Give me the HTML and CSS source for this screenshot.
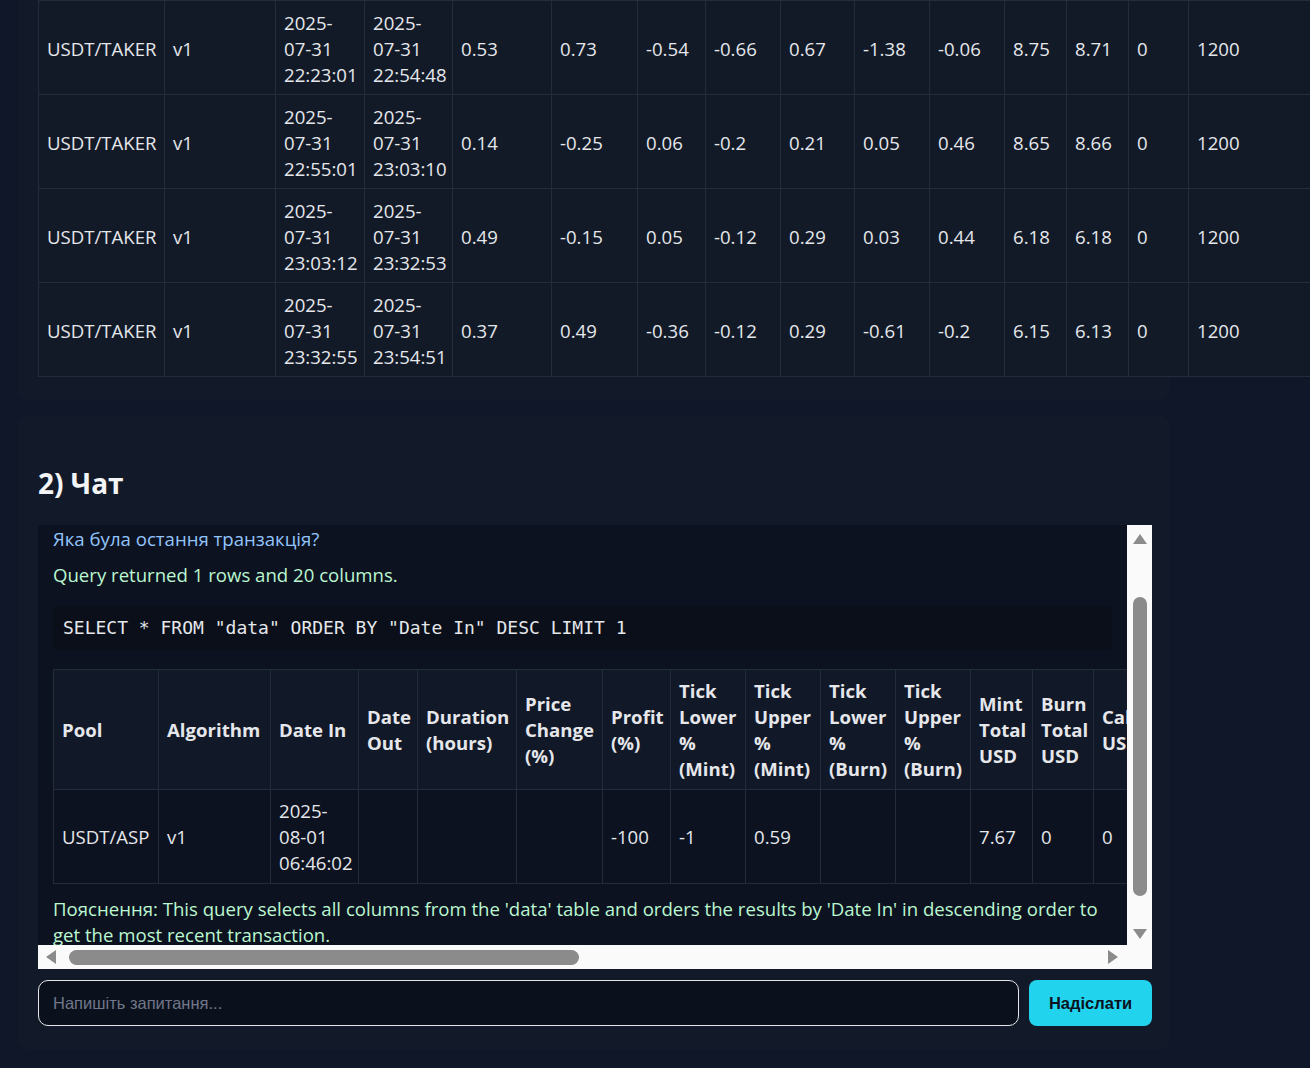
FILE: index.html
```html
<!DOCTYPE html>
<html lang="uk">
<head>
<meta charset="utf-8">
<title>Pools</title>
<link rel="stylesheet" href="styles.css">
</head>
<body>
<div class="page">
  <section class="card card-data">
    <table class="grid grid-top">
      <colgroup>
        <col class="c-pool"><col class="c-alg"><col class="c-din"><col class="c-dout"><col class="c-dur"><col class="c-pc"><col class="c-pr"><col class="c-tlm"><col class="c-tum"><col class="c-tlb"><col class="c-tub"><col class="c-mint"><col class="c-burn"><col class="c-fee"><col class="c-cap"><col class="c-x"><col class="c-x"><col class="c-x"><col class="c-x"><col class="c-x">
      </colgroup>
      <tbody>
        <tr><td>USDT/TAKER</td><td>v1</td><td>2025-<wbr>07-31 22:23:01</td><td>2025-<wbr>07-31 22:54:48</td><td>0.53</td><td>0.73</td><td>-0.54</td><td>-0.66</td><td>0.67</td><td>-1.38</td><td>-0.06</td><td>8.75</td><td>8.71</td><td>0</td><td>1200</td><td></td><td></td><td></td><td></td><td></td></tr>
        <tr><td>USDT/TAKER</td><td>v1</td><td>2025-<wbr>07-31 22:55:01</td><td>2025-<wbr>07-31 23:03:10</td><td>0.14</td><td>-0.25</td><td>0.06</td><td>-0.2</td><td>0.21</td><td>0.05</td><td>0.46</td><td>8.65</td><td>8.66</td><td>0</td><td>1200</td><td></td><td></td><td></td><td></td><td></td></tr>
        <tr><td>USDT/TAKER</td><td>v1</td><td>2025-<wbr>07-31 23:03:12</td><td>2025-<wbr>07-31 23:32:53</td><td>0.49</td><td>-0.15</td><td>0.05</td><td>-0.12</td><td>0.29</td><td>0.03</td><td>0.44</td><td>6.18</td><td>6.18</td><td>0</td><td>1200</td><td></td><td></td><td></td><td></td><td></td></tr>
        <tr><td>USDT/TAKER</td><td>v1</td><td>2025-<wbr>07-31 23:32:55</td><td>2025-<wbr>07-31 23:54:51</td><td>0.37</td><td>0.49</td><td>-0.36</td><td>-0.12</td><td>0.29</td><td>-0.61</td><td>-0.2</td><td>6.15</td><td>6.13</td><td>0</td><td>1200</td><td></td><td></td><td></td><td></td><td></td></tr>
      </tbody>
    </table>
  </section>

  <section class="card card-chat">
    <h2 class="section-title">2) Чат</h2>
    <div class="chat-box">
      <div class="chat-content">
        <p class="msg msg-user">Яка була остання транзакція?</p>
        <p class="msg msg-bot msg-status">Query returned 1 rows and 20 columns.</p>
        <pre class="sql">SELECT * FROM "data" ORDER BY "Date In" DESC LIMIT 1</pre>
        <table class="grid grid-chat">
          <colgroup>
            <col class="k-pool"><col class="k-alg"><col class="k-din"><col class="k-dout"><col class="k-dur"><col class="k-pc"><col class="k-pr"><col class="k-t"><col class="k-t"><col class="k-t"><col class="k-t"><col class="k-mint"><col class="k-burn"><col class="k-x"><col class="k-x"><col class="k-x"><col class="k-x"><col class="k-x"><col class="k-x"><col class="k-x">
          </colgroup>
          <thead>
            <tr><th>Pool</th><th>Algorithm</th><th>Date In</th><th>Date Out</th><th>Duration (hours)</th><th>Price Change (%)</th><th>Profit (%)</th><th>Tick Lower % (Mint)</th><th>Tick Upper % (Mint)</th><th>Tick Lower % (Burn)</th><th>Tick Upper % (Burn)</th><th>Mint Total USD</th><th>Burn Total USD</th><th>Cal USD</th><th>Cap USD</th><th>Fee USD</th><th>Gas USD</th><th>Net USD</th><th>Low</th><th>High</th></tr>
          </thead>
          <tbody>
            <tr><td>USDT/ASP</td><td>v1</td><td>2025-<wbr>08-01 06:46:02</td><td></td><td></td><td></td><td>-100</td><td>-1</td><td>0.59</td><td></td><td></td><td>7.67</td><td>0</td><td>0</td><td>1200</td><td></td><td></td><td></td><td></td><td></td></tr>
          </tbody>
        </table>
        <p class="msg msg-bot msg-explain">Пояснення: This query selects all columns from the 'data' table and orders the results by 'Date In' in descending order to get the most recent transaction.</p>
      </div>
      <div class="vbar">
        <span class="arrow arrow-up"></span>
        <span class="thumb thumb-v"></span>
        <span class="arrow arrow-down"></span>
      </div>
      <div class="hbar">
        <span class="arrow arrow-left"></span>
        <span class="thumb thumb-h"></span>
        <span class="arrow arrow-right"></span>
      </div>
      <div class="corner"></div>
    </div>
    <form class="ask">
      <input class="ask-input" type="text" placeholder="Напишіть запитання...">
      <button class="ask-send" type="button">Надіслати</button>
    </form>
  </section>
</div>
</body>
</html>
```

FILE: styles.css
```css
* { box-sizing: border-box; }

html, body {
  margin: 0;
  padding: 0;
  background: #0f1728;
  overflow: hidden;
}

body {
  width: 1310px;
  height: 1068px;
  font-family: "Open Sans", "Noto Sans", sans-serif;
  font-size: 18.6px;
  line-height: 26px;
  color: #e5e7eb;
}

.page {
  display: flex;
  flex-direction: column;
  gap: 14px;
  padding-left: 18px;
}

.card {
  width: 1152px;
  background: #121a29;
  border-radius: 12px;
  padding: 0 20px;
}

.card-data {
  padding-top: 0;
  padding-bottom: 24px;
  border-top-left-radius: 0;
  border-top-right-radius: 0;
}

.card-chat {
  padding-top: 51px;
  padding-bottom: 24px;
}

/* ---------- tables ---------- */
.grid {
  border-collapse: collapse;
  table-layout: fixed;
}

.grid td,
.grid th {
  border: 1px solid #232c3b;
  padding: 8px 8px 7px;
  vertical-align: middle;
  text-align: left;
  overflow: hidden;
}

.grid-top {
  width: 1780px;
  background: #121a28;
}

.grid-top td {
  padding: 9px 8px 6px;
}

.c-pool { width: 126px; }
.c-alg { width: 111px; }
.c-din { width: 89px; }
.c-dout { width: 88px; }
.c-dur { width: 99px; }
.c-pc { width: 86px; }
.c-pr { width: 68px; }
.c-tlm { width: 75px; }
.c-tum { width: 74px; }
.c-tlb { width: 75px; }
.c-tub { width: 75px; }
.c-mint { width: 62px; }
.c-burn { width: 62px; }
.c-fee { width: 60px; }
.c-cap { width: 130px; }
.c-x { width: 100px; }

/* ---------- chat ---------- */
.section-title {
  margin: 0 0 25px;
  font-size: 28px;
  line-height: 34px;
  font-weight: 700;
  color: #f3f4f6;
}

.chat-box {
  display: grid;
  grid-template-columns: 1089px 25px;
  grid-template-rows: 420px 24px;
  width: 1114px;
}

.chat-content {
  overflow: hidden;
  background: #0c1220;
  padding: 1px 15px 0;
}

.msg {
  margin: 0;
}

.msg-user { color: #93c5fd; }

.msg-bot { color: #bbf7d0; }

.msg-status { margin-top: 10px; }

.sql {
  margin: 18px 0 0;
  padding: 10px;
  background: #0a0f19;
  border-radius: 6px;
  font-family: "DejaVu Sans Mono", "Liberation Mono", monospace;
  font-size: 18px;
  line-height: 24px;
  color: #e5e7eb;
}

.grid-chat {
  margin-top: 19px;
  width: 1530px;
}

.grid-chat thead th {
  background: #111827;
  font-weight: 700;
}

.grid-chat tbody td {
  background: #0c1220;
}

.k-pool { width: 105px; }
.k-alg { width: 112px; }
.k-din { width: 88px; }
.k-dout { width: 59px; }
.k-dur { width: 99px; }
.k-pc { width: 86px; }
.k-pr { width: 68px; }
.k-t { width: 75px; }
.k-mint { width: 62px; }
.k-burn { width: 61px; }
.k-x { width: 70px; }

.msg-explain {
  margin-top: 12px;
}

/* ---------- fake scrollbars ---------- */
.vbar,
.hbar,
.corner {
  background: #fafafa;
}

.vbar {
  display: flex;
  flex-direction: column;
  align-items: center;
  padding-top: 9px;
}

.hbar {
  display: flex;
  align-items: center;
  padding-left: 8px;
  padding-right: 9px;
}

.thumb {
  display: block;
  background: #8b8b8b;
}

.thumb-v {
  width: 14px;
  height: 299px;
  border-radius: 7px;
  margin-top: 53px;
}

.thumb-h {
  width: 510px;
  height: 15px;
  border-radius: 8px;
  margin-left: 13px;
}

.arrow {
  display: block;
  width: 0;
  height: 0;
}

.arrow-up {
  border-left: 7px solid transparent;
  border-right: 7px solid transparent;
  border-bottom: 10px solid #8b8b8b;
}

.arrow-down {
  margin-top: 33px;
  border-left: 7px solid transparent;
  border-right: 7px solid transparent;
  border-top: 10px solid #8b8b8b;
}

.arrow-left {
  border-top: 7px solid transparent;
  border-bottom: 7px solid transparent;
  border-right: 10px solid #8b8b8b;
}

.arrow-right {
  margin-left: auto;
  border-top: 7px solid transparent;
  border-bottom: 7px solid transparent;
  border-left: 10px solid #8b8b8b;
}

/* ---------- input ---------- */
.ask {
  display: flex;
  gap: 10px;
  margin: 11px 0 0;
  width: 1114px;
}

.ask-input {
  flex: 1;
  height: 46px;
  padding: 0 14px;
  border: 1px solid #e5e7eb;
  border-radius: 10px;
  background: #0b111c;
  color: #e5e7eb;
  font-family: "Liberation Sans", Arial, sans-serif;
  font-size: 16.5px;
  outline: none;
}

.ask-input::placeholder {
  color: #71778a;
}

.ask-send {
  width: 123px;
  height: 46px;
  border: 0;
  border-radius: 8px;
  background: #22d3ee;
  color: #0b1220;
  font-family: "Liberation Sans", Arial, sans-serif;
  font-size: 16.5px;
  font-weight: 700;
}
```
